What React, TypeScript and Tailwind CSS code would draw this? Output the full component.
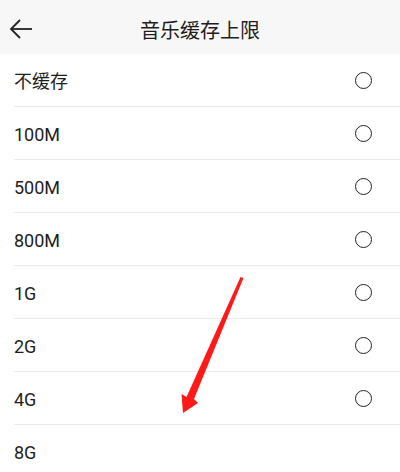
import React from "react";

const items = ["不缓存", "100M", "500M", "800M", "1G", "2G", "4G", "8G"];

export default function App() {
  return (
    <div
      className="relative w-[400px] h-[472px] overflow-hidden bg-white text-[#1e1e1e]"
      style={{ fontFamily: 'Roboto, "Noto Sans CJK SC", sans-serif' }}
    >
      <div className="relative h-[54px] bg-[#f7f7f7] flex items-center justify-center pt-[8px]">
        <svg
          className="absolute left-[9px] top-[18px]"
          width="24"
          height="22"
          viewBox="0 0 24 22"
          fill="none"
          stroke="#222"
          strokeWidth="1.8"
        >
          <path d="M2 11 H23" />
          <path d="M11 2 L2 11 L11 20" />
        </svg>
        <span className="text-[20px] leading-none">音乐缓存上限</span>
      </div>
      {items.map((t, i) => (
        <div key={t} className="pl-[14px]">
          <div
            className={
              "h-[53px] flex items-center justify-between pr-[28px] " +
              (i < items.length - 1 ? "border-b border-[#ebebeb]" : "")
            }
          >
            <span className="text-[18px] leading-none pt-[3px]">{t}</span>
            {i < items.length - 1 && (
              <span className="w-[17px] h-[17px] rounded-full border-[1.5px] border-[#222]" />
            )}
          </div>
        </div>
      ))}
      <svg
        className="absolute left-0 top-0 pointer-events-none"
        width="400"
        height="472"
        viewBox="0 0 400 472"
      >
        <polygon
          points="240.5,277 243.5,278 194,399 198,403 183,413 181.5,394 186.5,397"
          fill="#ff1a1a"
        />
      </svg>
    </div>
  );
}
